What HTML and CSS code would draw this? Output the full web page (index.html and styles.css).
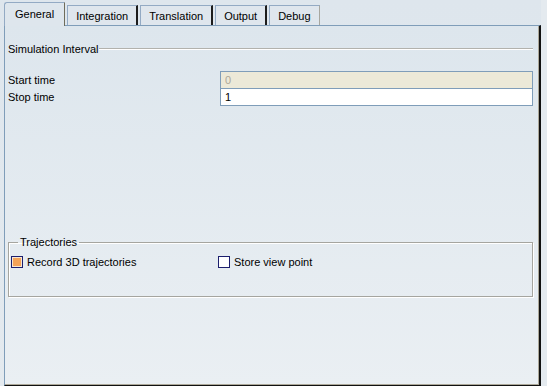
FILE: index.html
```html
<!DOCTYPE html>
<html lang="en">
<head>
    <meta charset="UTF-8">
    <title>Simulation settings</title>
    <link rel="stylesheet" href="styles.css">
</head>
<body>

    <div class="dialog">
        <div class="tabs">
            <div class="tab active">General</div>
            <div class="tab">Integration</div>
            <div class="tab">Translation</div>
            <div class="tab">Output</div>
            <div class="tab last">Debug</div>
        </div>

        <div class="panel">
            <div class="section-title">
                <span>Simulation Interval</span>
                <div class="rule"></div>
            </div>

            <div class="field-grid">
                <label for="start">Start time</label>
                <input type="text" id="start" class="disabled" value="0" readonly>
                <label for="stop">Stop time</label>
                <input type="text" id="stop" class="second" value="1">
            </div>

            <fieldset class="group">
                <legend>Trajectories</legend>
                <div class="checks">
                    <div class="check"><span class="box checked"></span>Record 3D trajectories</div>
                    <div class="check"><span class="box"></span>Store view point</div>
                </div>
            </fieldset>
        </div>
    </div>

</body>
</html>
```

FILE: styles.css
```css
body {
    margin: 0;
    font-family: "Liberation Sans", Arial, sans-serif;
    font-size: 11px;
    color: #000;
    background-color: #e4eaef;
}
.dialog {
    width: 541px;
    height: 386px;
    display: flex;
    flex-direction: column;
    background: linear-gradient(#dee6ed, #e4eaef);
}
.tabs {
    display: flex;
    align-items: flex-end;
    gap: 2px;
    height: 26px;
    padding-left: 4px;
}
.tab {
    height: 19px;
    padding: 0 8px;
    display: flex;
    align-items: center;
    border-top: 1px solid #93aac4;
    border-left: 1px solid #93aac4;
    border-right: 2px solid #1c1c1c;
    background-color: #dfe6ed;
}
.tab.active {
    position: relative;
    z-index: 1;
    height: 22px;
    margin-bottom: -1px;
    padding: 0 10px 1px 10px;
    border-radius: 3px 0 0 0;
    border-right: 1px solid #6f6c5a;
    background-color: #dee6ed;
}
.tab.last {
    border-right: 1px solid #a7a7a0;
}
.panel {
    height: 355px;
    border-top: 1px solid #7f9db9;
    border-left: 1px solid #7f9db9;
    border-right: 2px solid #111;
    border-bottom: 1px solid #111;
    box-shadow: inset -1px -1px 0 #aca899;
    margin-left: 4px;
    padding: 16px 6px 0 3px;
    background: linear-gradient(#dde6ed, #eaeff3);
}
.section-title {
    display: flex;
    align-items: center;
    height: 14px;
}
.rule {
    flex: 1;
    height: 0;
    border-top: 1px solid #b2b2ad;
    border-bottom: 1px solid #fff;
}
.field-grid {
    display: grid;
    grid-template-columns: 212px 1fr;
    margin-top: 15px;
}
.field-grid label {
    display: flex;
    align-items: center;
    height: 17px;
}
.field-grid input {
    box-sizing: border-box;
    height: 18px;
    margin: 0 0 -1px 0;
    padding: 0 4px;
    border: 1px solid #7f9db9;
    font-family: inherit;
    font-size: 11px;
    background-color: #fff;
    outline: none;
}
.field-grid input.disabled {
    background-color: #ece9d8;
    color: #aca899;
}
.group {
    margin: 131px 0 0 0;
    height: 61px;
    box-sizing: border-box;
    padding: 0 2px;
    border: 1px solid #a5a59f;
    box-shadow: 1px 1px 0 #fff, inset 1px 1px 0 #fff;
}
.group legend {
    padding: 0 2px;
    margin-left: 7px;
    line-height: 12px;
}
.checks {
    display: flex;
    margin-top: 8px;
}
.check {
    display: flex;
    align-items: center;
    gap: 4px;
    width: 207px;
}
.box {
    box-sizing: border-box;
    width: 12px;
    height: 12px;
    border: 1px solid #1c1f6e;
    background-color: #fff;
}
.box.checked {
    background-color: #f4a358;
    box-shadow: inset 0 0 0 1px #f8e6d2;
}
```
